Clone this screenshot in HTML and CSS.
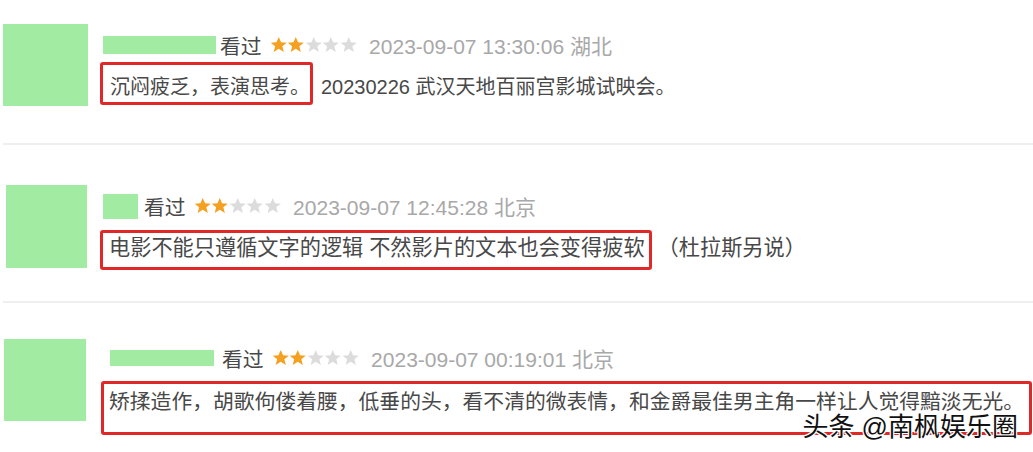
FILE: index.html
```html
<!DOCTYPE html>
<html lang="zh-CN">
<head>
    <meta charset="UTF-8">
    <meta name="viewport" content="width=device-width, initial-scale=1.0">
    <title>短评</title>
    <link rel="stylesheet" href="styles.css">
</head>
<body>
    <div class="list">
        <div class="comment first">
            <div class="avatar"></div>
            <div class="content">
                <div class="meta">
                    <span class="name wide"></span>
                    <span class="status">看过</span>
                    <span class="stars">
                        <svg viewBox="0 0 20 20"><polygon class="on" points="10,1 12.6,7.2 19.2,7.6 14.1,11.8 15.8,18.4 10,14.7 4.2,18.4 5.9,11.8 0.8,7.6 7.4,7.2"/></svg><svg viewBox="0 0 20 20"><polygon class="on" points="10,1 12.6,7.2 19.2,7.6 14.1,11.8 15.8,18.4 10,14.7 4.2,18.4 5.9,11.8 0.8,7.6 7.4,7.2"/></svg><svg viewBox="0 0 20 20"><polygon points="10,1 12.6,7.2 19.2,7.6 14.1,11.8 15.8,18.4 10,14.7 4.2,18.4 5.9,11.8 0.8,7.6 7.4,7.2"/></svg><svg viewBox="0 0 20 20"><polygon points="10,1 12.6,7.2 19.2,7.6 14.1,11.8 15.8,18.4 10,14.7 4.2,18.4 5.9,11.8 0.8,7.6 7.4,7.2"/></svg><svg viewBox="0 0 20 20"><polygon points="10,1 12.6,7.2 19.2,7.6 14.1,11.8 15.8,18.4 10,14.7 4.2,18.4 5.9,11.8 0.8,7.6 7.4,7.2"/></svg>
                    </span>
                    <span class="time">2023-09-07 13:30:06 湖北</span>
                </div>
                <p class="text"><span class="mark">沉闷疲乏，表演思考。</span>20230226 武汉天地百丽宫影城试映会。</p>
            </div>
        </div>

        <div class="comment second">
            <div class="avatar"></div>
            <div class="content">
                <div class="meta">
                    <span class="name short"></span>
                    <span class="status">看过</span>
                    <span class="stars">
                        <svg viewBox="0 0 20 20"><polygon class="on" points="10,1 12.6,7.2 19.2,7.6 14.1,11.8 15.8,18.4 10,14.7 4.2,18.4 5.9,11.8 0.8,7.6 7.4,7.2"/></svg><svg viewBox="0 0 20 20"><polygon class="on" points="10,1 12.6,7.2 19.2,7.6 14.1,11.8 15.8,18.4 10,14.7 4.2,18.4 5.9,11.8 0.8,7.6 7.4,7.2"/></svg><svg viewBox="0 0 20 20"><polygon points="10,1 12.6,7.2 19.2,7.6 14.1,11.8 15.8,18.4 10,14.7 4.2,18.4 5.9,11.8 0.8,7.6 7.4,7.2"/></svg><svg viewBox="0 0 20 20"><polygon points="10,1 12.6,7.2 19.2,7.6 14.1,11.8 15.8,18.4 10,14.7 4.2,18.4 5.9,11.8 0.8,7.6 7.4,7.2"/></svg><svg viewBox="0 0 20 20"><polygon points="10,1 12.6,7.2 19.2,7.6 14.1,11.8 15.8,18.4 10,14.7 4.2,18.4 5.9,11.8 0.8,7.6 7.4,7.2"/></svg>
                    </span>
                    <span class="time">2023-09-07 12:45:28 北京</span>
                </div>
                <p class="text"><span class="mark">电影不能只遵循文字的逻辑 不然影片的文本也会变得疲软</span>（杜拉斯另说）</p>
            </div>
        </div>

        <div class="comment third">
            <div class="avatar"></div>
            <div class="content">
                <div class="meta">
                    <span class="name wide"></span>
                    <span class="status">看过</span>
                    <span class="stars">
                        <svg viewBox="0 0 20 20"><polygon class="on" points="10,1 12.6,7.2 19.2,7.6 14.1,11.8 15.8,18.4 10,14.7 4.2,18.4 5.9,11.8 0.8,7.6 7.4,7.2"/></svg><svg viewBox="0 0 20 20"><polygon class="on" points="10,1 12.6,7.2 19.2,7.6 14.1,11.8 15.8,18.4 10,14.7 4.2,18.4 5.9,11.8 0.8,7.6 7.4,7.2"/></svg><svg viewBox="0 0 20 20"><polygon points="10,1 12.6,7.2 19.2,7.6 14.1,11.8 15.8,18.4 10,14.7 4.2,18.4 5.9,11.8 0.8,7.6 7.4,7.2"/></svg><svg viewBox="0 0 20 20"><polygon points="10,1 12.6,7.2 19.2,7.6 14.1,11.8 15.8,18.4 10,14.7 4.2,18.4 5.9,11.8 0.8,7.6 7.4,7.2"/></svg><svg viewBox="0 0 20 20"><polygon points="10,1 12.6,7.2 19.2,7.6 14.1,11.8 15.8,18.4 10,14.7 4.2,18.4 5.9,11.8 0.8,7.6 7.4,7.2"/></svg>
                    </span>
                    <span class="time">2023-09-07 00:19:01 北京</span>
                </div>
                <p class="text"><span class="mark block">矫揉造作，胡歌佝偻着腰，低垂的头，看不清的微表情，和金爵最佳男主角一样让人觉得黯淡无光。</span></p>
            </div>
        </div>
    </div>

    <div class="watermark">头条 @南枫娱乐圈</div>
</body>
</html>
```

FILE: styles.css
```css
body {
    margin: 0;
    background: #fff;
    font-family: "Liberation Sans", "Noto Sans CJK SC", sans-serif;
    color: #484848;
    width: 1033px;
    height: 452px;
    overflow: hidden;
    position: relative;
}
.list {
    padding-left: 3px;
}
.comment {
    display: flex;
    gap: 15px;
    border-bottom: 2px solid #efefef;
}
.comment.first {
    padding: 24px 0 37px;
}
.comment.second {
    padding: 40px 0 31px 3px;
}
.comment.third {
    padding: 36px 0 0 1px;
    border-bottom: none;
}
.avatar {
    width: 85px;
    height: 82px;
    background: #a2eba2;
    flex-shrink: 0;
}
.second .avatar {
    width: 81px;
    height: 83px;
}
.third .avatar {
    width: 82px;
}
.content {
    flex: 1;
    padding-top: 9px;
}
.third .content {
    padding-top: 7px;
}
.meta {
    display: flex;
    align-items: center;
    height: 24px;
    font-size: 20.8px;
}
.name {
    display: inline-block;
    background: #a2eba2;
    height: 18px;
    margin-right: 4px;
}
.name.wide {
    width: 113px;
}
.third .name {
    width: 104px;
    height: 16px;
    margin-left: 9px;
    margin-right: 8px;
}
.name.short {
    width: 35px;
    height: 25px;
    margin-left: 1px;
    margin-right: 6px;
}
.status {
    margin-right: 8px;
}
.stars {
    display: flex;
    margin-right: 12px;
}
.stars svg {
    width: 17.5px;
    height: 17.5px;
    fill: #dcdcdc;
}
.stars .on {
    fill: #f5a020;
}
.time {
    color: #a8a8a8;
    font-size: 21px;
}
.text {
    margin: 5px 0 0 -3px;
    font-size: 20px;
    line-height: 28px;
}
.second .text {
    margin-top: 12px;
    margin-left: -2px;
    font-size: 21.2px;
}
.third .text {
    margin-top: 11px;
    margin-left: 0;
    font-size: 20.8px;
}
.mark {
    display: inline-block;
    border: 3px solid #e02828;
    border-radius: 3px;
    padding: 8px 0 1px 7px;
    margin-right: 8px;
}
.second .mark {
    padding: 1px 4px 5px 6px;
    margin-right: 6px;
}
.mark.block {
    display: block;
    padding: 4px 4px 16px 5px;
    margin-right: 1px;
}
.watermark {
    position: absolute;
    right: 15px;
    bottom: 9px;
    font-size: 26px;
    color: #111;
    text-shadow: 1px 1px 0 #fff, -1px -1px 0 #fff, 1px -1px 0 #fff, -1px 1px 0 #fff;
}
```
